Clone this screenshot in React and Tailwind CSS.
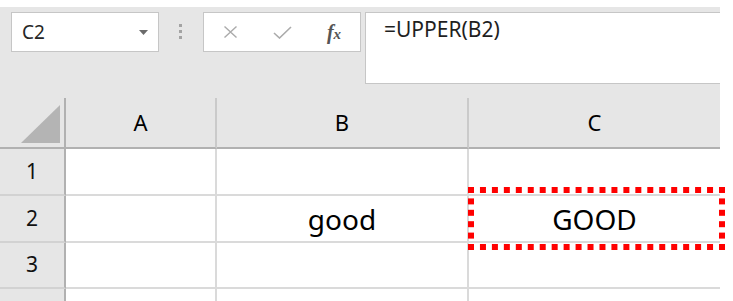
import React from 'react';

const rows = [
  { n: '1', b: '', c: '', h: 'h-[47px]' },
  { n: '2', b: 'good', c: 'GOOD', h: 'h-[47px]' },
  { n: '3', b: '', c: '', h: 'h-[46px]' },
  { n: '4', b: '', c: '', h: 'h-[47px]' },
];

// dotted red frame drawn as squares so the corners line up
const DottedFrame = () => {
  const w = 257;
  const h = 63;
  const s = 6;
  const squares = [];
  for (let i = 0; i < 22; i++) {
    const x = (i * (w - s)) / 21;
    squares.push([x, 0], [x, h - s]);
  }
  for (let i = 1; i < 5; i++) {
    const y = (i * (h - s)) / 5;
    squares.push([0, y], [w - s, y]);
  }
  return (
    <svg width={w} height={h} className="absolute left-[468px] top-[187px]">
      {squares.map(([x, y], i) => (
        <rect key={i} x={x} y={y} width={s} height={s} fill="#ff0000" />
      ))}
    </svg>
  );
};

const NameBox = () => (
  <div className="w-[148px] h-[40px] bg-white border border-[#c6c6c6] flex items-center justify-between pl-[10px] pr-[10px]">
    <span className="text-[19px] text-[#262626] leading-none">C2</span>
    <svg width="9" height="5" viewBox="0 0 9 5">
      <polygon points="0,0 9,0 4.5,5" fill="#6b6b6b" />
    </svg>
  </div>
);

const FunctionButtons = () => (
  <div className="w-[158px] h-[40px] bg-white border border-[#c6c6c6] flex items-center">
    <div className="w-[52px] flex justify-center">
      <svg width="15" height="12" viewBox="0 0 15 12">
        <path d="M1.5 0.5 L13.5 11.5 M13.5 0.5 L1.5 11.5" stroke="#ababab" strokeWidth="1.4" fill="none" />
      </svg>
    </div>
    <div className="w-[52px] flex justify-center">
      <svg width="19" height="13" viewBox="0 0 19 13">
        <path d="M1 7 L6.5 12 L18 1" stroke="#ababab" strokeWidth="1.6" fill="none" />
      </svg>
    </div>
    <div className="w-[52px] flex justify-center">
      <span className="font-['Liberation_Serif',serif] italic font-bold text-[#555] text-[20px] leading-none">
        f<span className="text-[15px]">x</span>
      </span>
    </div>
  </div>
);

export default function App() {
  return (
    <div className="relative w-[733px] h-[301px] bg-white overflow-hidden font-['Noto_Sans','Noto_Sans_CJK_KR',sans-serif]">
      <div className="w-[720px] h-[7px] bg-white" />
      <div className="w-[720px] h-[294px] bg-[#e6e6e6] flex flex-col overflow-hidden">
        {/* formula bar */}
        <div className="h-[91px] shrink-0 flex items-start pl-[11px] pt-[5px]">
          <NameBox />
          <div className="ml-[20px] mr-[21px] mt-[12px] flex flex-col gap-[3px]">
            <div className="w-[3px] h-[3px] bg-[#a3a3a3]" />
            <div className="w-[3px] h-[3px] bg-[#a3a3a3]" />
            <div className="w-[3px] h-[3px] bg-[#a3a3a3]" />
          </div>
          <FunctionButtons />
          <div className="ml-[4px] flex-1 h-[72px] bg-white border-l border-t border-b border-[#c6c6c6] pl-[18px] pt-[2px]">
            <span className="text-[21px] text-[#1f1f1f] leading-[28px]">=UPPER(B2)</span>
          </div>
        </div>

        {/* sheet */}
        <div className="shrink-0 grid grid-cols-[66px_151px_252px_251px] text-black">
          <div className="h-[51px] border-r-2 border-b-2 border-[#b1b1b1] flex items-end justify-end pr-[4px] pb-[4px]">
            <svg width="39" height="38" viewBox="0 0 39 38">
              <polygon points="39,0 39,38 0,38" fill="#b4b4b4" />
            </svg>
          </div>
          {['A', 'B', 'C'].map((col, i) => (
            <div
              key={col}
              className={`h-[51px] border-b-2 border-b-[#b1b1b1] flex items-center justify-center text-[22px] ${i < 2 ? 'border-r-2 border-r-[#cacaca]' : ''}`}
            >
              {col}
            </div>
          ))}

          {rows.map((r) => (
            <React.Fragment key={r.n}>
              <div className={`${r.h} border-r-2 border-r-[#b1b1b1] border-b-2 border-b-[#d2d2d2] flex items-center justify-center text-[21px] text-[#111]`}>
                {r.n}
              </div>
              <div className={`${r.h} bg-white border-r-2 border-b-2 border-[#dadada]`} />
              <div className={`${r.h} bg-white border-r-2 border-b-2 border-[#dadada] flex items-center justify-center text-[28px]`}>
                {r.b}
              </div>
              <div className={`${r.h} bg-white border-b-2 border-[#dadada] flex items-center justify-center text-[28px]`}>
                {r.c}
              </div>
            </React.Fragment>
          ))}
        </div>
      </div>
      <DottedFrame />
    </div>
  );
}
